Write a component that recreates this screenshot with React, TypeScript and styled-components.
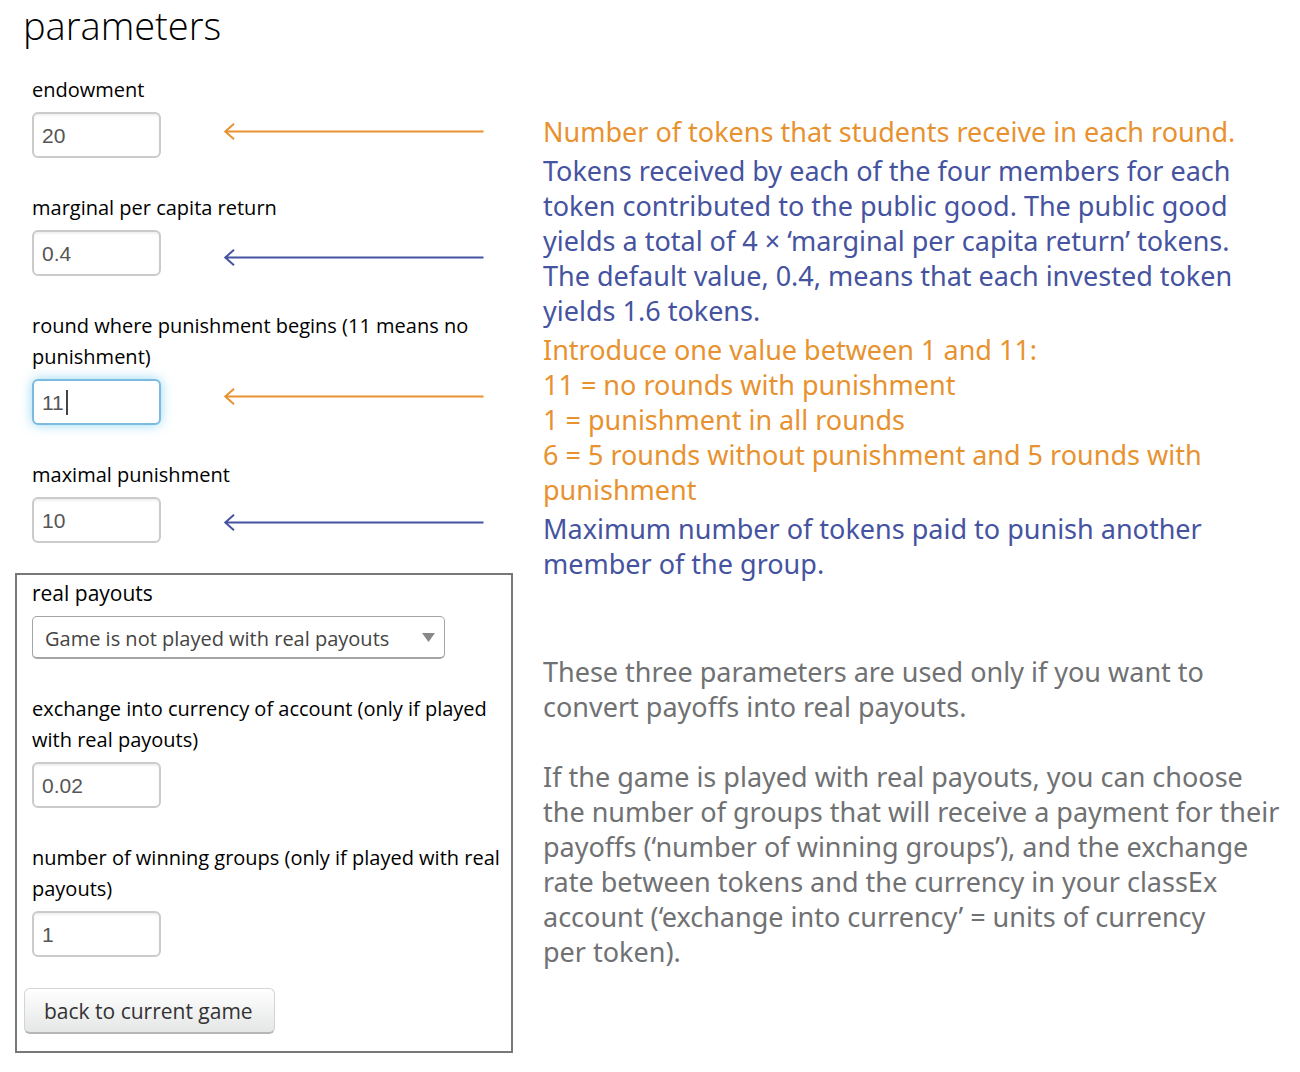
import React from "react";
import styled, { createGlobalStyle } from "styled-components";

const ORANGE = "#e8922f";
const BLUE = "#4553a0";
const GREY = "#707173";

const GlobalStyle = createGlobalStyle`
  *, *::before, *::after { box-sizing: border-box; }
  body {
    margin: 0;
    background: #fff;
    color: #000;
    font-family: "Open Sans", "Noto Sans", sans-serif;
  }
`;

const Page = styled.main`
  padding: 0 8px 19px 15px;
`;

const Title = styled.h1`
  margin: 0;
  padding: 0 8px;
  font-size: 38px;
  font-weight: 300;
  line-height: 50px;
`;

const Columns = styled.div`
  display: grid;
  grid-template-columns: minmax(0, 498px) minmax(0, 1fr);
  column-gap: 30px;
`;

const FormColumn = styled.form`
  display: grid;
  grid-template-columns: minmax(0, 1fr);
  padding-top: 24px;
`;

const Stack = styled.div`
  grid-area: 1 / 1;
  display: flex;
  flex-direction: column;
`;

const Fields = styled.div`
  display: flex;
  flex-direction: column;
  gap: 34px;
  padding: 0 8px 0 17px;
`;

const PayoutBox = styled.section`
  margin-top: 30px;
  padding: 3px 0 17px;
  border: 2px solid #77787a;

  ${Fields} {
    padding: 0 8px 0 15px;
  }
`;

const FieldGroup = styled.div`
  display: flex;
  flex-direction: column;
  align-items: flex-start;
  gap: 7px;
`;

const Label = styled.label<{ $large?: boolean }>`
  font-size: ${(p) => (p.$large ? "21px" : "20px")};
  line-height: 31px;
`;

const Control = styled.div`
  position: relative;
  display: flex;
`;

const TextInput = styled.input<{ $active?: boolean }>`
  width: 129px;
  height: 46px;
  padding: 2px 8px 0;
  border: 2px solid ${(p) => (p.$active ? "#7cbbe0" : "#cbcbcb")};
  border-radius: 6px;
  outline: none;
  background: #fff;
  color: #555;
  font-family: "Liberation Sans", Arial, sans-serif;
  font-size: 21px;
  box-shadow: ${(p) =>
    p.$active ? "0 0 12px rgba(82, 190, 236, 0.6)" : "inset 0 2px 2px rgba(0, 0, 0, 0.06)"};

  &:focus {
    border-color: #7cbbe0;
    box-shadow: 0 0 12px rgba(82, 190, 236, 0.6);
  }
`;

const Caret = styled.span`
  position: absolute;
  top: 11px;
  left: 34px;
  width: 2px;
  height: 25px;
  background: #444;
  pointer-events: none;

  ${Control}:focus-within & {
    display: none;
  }
`;

const Select = styled.select`
  width: 413px;
  height: 43px;
  padding: 2px 40px 0 12px;
  border: 1px solid #a5a5a5;
  border-bottom-width: 2px;
  border-radius: 5px;
  appearance: none;
  background: #fff;
  color: #444;
  font-family: inherit;
  font-size: 20px;
`;

const SelectMark = styled.svg`
  position: absolute;
  top: 17px;
  right: 10px;
  pointer-events: none;
`;

const BackButton = styled.button`
  height: 46px;
  margin: 31px 0 0 7px;
  padding: 0 21px 0 19px;
  border: 1px solid #d3d5d5;
  border-bottom: 2px solid #b5b7b7;
  border-radius: 6px;
  background: linear-gradient(#fff, #e5e6e6);
  color: #333;
  font-family: inherit;
  font-size: 21px;
  line-height: 30px;
`;

const Arrows = styled.div`
  grid-area: 1 / 1;
  display: grid;
  grid-template-rows: 126px 139px 126px 18px;
  align-content: start;
  justify-content: end;
  padding: 49px 29px 0 0;
  pointer-events: none;
`;

const ArrowSvg = styled.svg`
  display: block;
  fill: none;
  stroke-width: 2;
`;

const Notes = styled.div`
  display: flex;
  flex-direction: column;
  gap: 4px;
  padding-top: 64px;
`;

const Note = styled.p<{ $color: string }>`
  margin: 0;
  color: ${(p) => p.$color};
  font-family: "Noto Sans", "Open Sans", sans-serif;
  font-size: 27px;
  line-height: 35px;
  white-space: pre-line;
`;

const PayoutNotes = styled.div`
  display: flex;
  flex-direction: column;
  gap: 35px;
  padding-top: 69px;
`;

function Arrow({ color }: { color: string }) {
  return (
    <ArrowSvg width="261" height="18" viewBox="0 0 261 18" stroke={color} aria-hidden="true">
      <path d="M2 8.500H260.500M11 0.800L2.300 8.500L11 16.200" />
    </ArrowSvg>
  );
}

type FieldProps = { id: string; label: string; value: string; active?: boolean };

function Field({ id, label, value, active }: FieldProps) {
  return (
    <FieldGroup>
      <Label htmlFor={id}>{label}</Label>
      <Control>
        <TextInput id={id} type="text" defaultValue={value} $active={active} />
        {active && <Caret />}
      </Control>
    </FieldGroup>
  );
}

const notes = [
  { color: ORANGE, text: "Number of tokens that students receive in each round." },
  {
    color: BLUE,
    text: "Tokens received by each of the four members for each\ntoken contributed to the public good. The public good\nyields a total of 4 × ‘marginal per capita return’ tokens.\nThe default value, 0.4, means that each invested token\nyields 1.6 tokens.",
  },
  {
    color: ORANGE,
    text: "Introduce one value between 1 and 11:\n11 = no rounds with punishment\n1 = punishment in all rounds\n6 = 5 rounds without punishment and 5 rounds with\npunishment",
  },
  { color: BLUE, text: "Maximum number of tokens paid to punish another\nmember of the group." },
];

const payoutNotes = [
  "These three parameters are used only if you want to\nconvert payoffs into real payouts.",
  "If the game is played with real payouts, you can choose\nthe number of groups that will receive a payment for their\npayoffs (‘number of winning groups’), and the exchange\nrate between tokens and the currency in your classEx\naccount (‘exchange into currency’ = units of currency\nper token).",
];

export default function App() {
  return (
    <Page>
      <GlobalStyle />
      <Title>parameters</Title>
      <Columns>
        <FormColumn onSubmit={(e) => e.preventDefault()}>
          <Stack>
            <Fields>
              <Field id="endowment" label="endowment" value="20" />
              <Field id="mpcr" label="marginal per capita return" value="0.4" />
              <Field
                id="round"
                label="round where punishment begins (11 means no punishment)"
                value="11"
                active
              />
              <Field id="maximal" label="maximal punishment" value="10" />
            </Fields>
            <PayoutBox>
              <Fields>
                <FieldGroup>
                  <Label htmlFor="payouts" $large>
                    real payouts
                  </Label>
                  <Control>
                    <Select id="payouts">
                      <option>Game is not played with real payouts</option>
                    </Select>
                    <SelectMark width="13" height="9" viewBox="0 0 13 9" aria-hidden="true">
                      <path d="M0 0H13L6.500 9Z" fill="#888" />
                    </SelectMark>
                  </Control>
                </FieldGroup>
                <Field
                  id="exchange"
                  label="exchange into currency of account (only if played with real payouts)"
                  value="0.02"
                />
                <Field
                  id="groups"
                  label="number of winning groups (only if played with real payouts)"
                  value="1"
                />
              </Fields>
              <BackButton type="button">back to current game</BackButton>
            </PayoutBox>
          </Stack>
          <Arrows>
            <Arrow color={ORANGE} />
            <Arrow color={BLUE} />
            <Arrow color={ORANGE} />
            <Arrow color={BLUE} />
          </Arrows>
        </FormColumn>
        <Notes>
          {notes.map((n) => (
            <Note key={n.text} $color={n.color}>
              {n.text}
            </Note>
          ))}
          <PayoutNotes>
            {payoutNotes.map((t) => (
              <Note key={t} $color={GREY}>
                {t}
              </Note>
            ))}
          </PayoutNotes>
        </Notes>
      </Columns>
    </Page>
  );
}
